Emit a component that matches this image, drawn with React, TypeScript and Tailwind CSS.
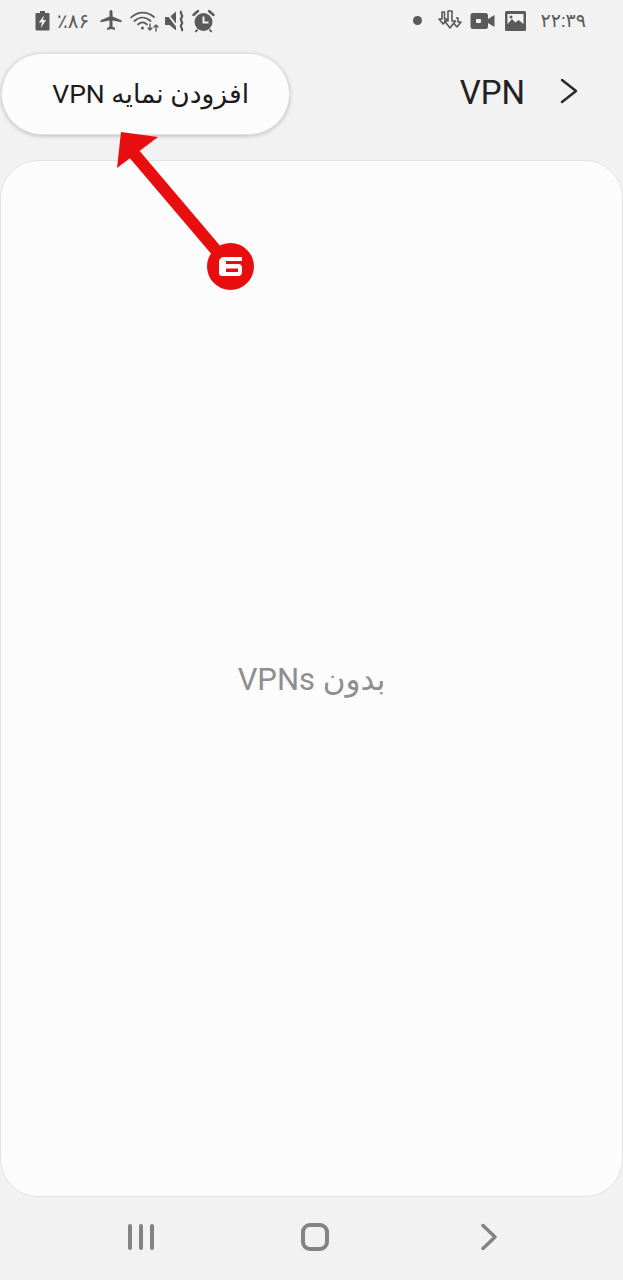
const fontStack = "font-['Roboto','DejaVu_Sans',sans-serif]";

const StatusLeft = () => (
  <div className="flex items-center text-[#5a5a5a]">
    {/* battery charging */}
    <svg width="15" height="21" viewBox="0 0 15 21" className="ml-[35px]">
      <path d="M5 1h5v2h3.500a1 1 0 0 1 1 1v15.500a1 1 0 0 1-1 1H1.500a1 1 0 0 1-1-1V4a1 1 0 0 1 1-1H5z" fill="#5a5a5a" />
      <path d="M9 5.500 3.800 12.500H7l-1.300 5.500 5.500-8H8z" fill="#f2f2f2" />
    </svg>
    <span className={`ml-[7px] w-[33px] text-[20px] leading-none ${fontStack}`}>٪۸۶</span>
    {/* airplane */}
    <svg width="24" height="24" viewBox="0 0 24 24" className="ml-[9px]" fill="#5a5a5a">
      <path d="M22.500 13.200v-2l-9-3.600V2.800C13.500 1.900 12.800 1 12 1s-1.500.9-1.500 1.800v4.800l-9 3.600v2l9-1.600v5.800L8 19.200V21l4-.9 4 .9v-1.800l-2.500-1.800v-5.800z" />
    </svg>
    {/* wifi with arrows */}
    <svg width="29" height="24" viewBox="0 0 29 24" className="ml-[7px]" fill="none" stroke="#5a5a5a" strokeWidth="1.700" strokeLinecap="round">
      <path d="M1 8.500C8 2 17 2 24 8" />
      <path d="M4.500 12c5-4.500 11-4.500 16 0" />
      <path d="M8 15.500c3-2.700 6-2.700 9 0" />
      <circle cx="12.500" cy="19" r="1.500" fill="#5a5a5a" stroke="none" />
      <path d="M20 15v6m-2-2 2 2 2-2M26 22v-6m-2 2 2-2 2 2" strokeWidth="1.400" />
    </svg>
    {/* muted vibrate */}
    <svg width="22" height="24" viewBox="0 0 22 24" className="ml-[5px]">
      <path d="M1 8h4.500L12 2.500v19L5.500 16H1z" fill="#5a5a5a" />
      <path d="M2 3l13 17" stroke="#f2f2f2" strokeWidth="2" />
      <path d="M17.500 2c-2.500 2.500 2.500 4 0 6.700s2.500 4 0 6.700 2.500 4 0 6.600" stroke="#5a5a5a" strokeWidth="2.200" fill="none" />
    </svg>
    {/* alarm */}
    <svg width="23" height="24" viewBox="0 0 23 24" className="ml-[6px]">
      <circle cx="11.500" cy="13" r="9" fill="#5a5a5a" />
      <path d="M11.500 7.500V13.500H16.500" stroke="#f2f2f2" strokeWidth="2" fill="none" />
      <path d="M1.500 6 6 2M21.500 6 17 2" stroke="#5a5a5a" strokeWidth="2.400" strokeLinecap="round" />
      <path d="M5.500 20.500 3.500 23M17.500 20.500l2 2.500" stroke="#5a5a5a" strokeWidth="2" />
    </svg>
  </div>
);

const StatusRight = () => (
  <div className="flex items-center text-[#5a5a5a]">
    <span className="w-[9px] h-[9px] rounded-full bg-[#5a5a5a]" />
    {/* download arrows */}
    <svg width="24" height="22" viewBox="0 0 24 22" className="ml-[16px]" fill="none" stroke="#5a5a5a" strokeWidth="1.600" strokeLinejoin="round">
      <path d="M4 2h2.500v7h2.700L5.200 14 1 9h3z" />
      <path d="M10 1h4v10h3.500L12 18 6.500 11H10z" fill="#f2f2f2" />
      <path d="M18 8h2v4h3l-4 5-3.500-4" />
    </svg>
    {/* video */}
    <svg width="25" height="18" viewBox="0 0 25 18" className="ml-[8px]">
      <rect x="0.500" y="1" width="17.500" height="16" rx="2.500" fill="#5a5a5a" />
      <path d="M18 7l6.500-4v12L18 11z" fill="#5a5a5a" />
      <rect x="6" y="7" width="5" height="4" rx="1" fill="#f2f2f2" />
    </svg>
    {/* image */}
    <svg width="21" height="20" viewBox="0 0 21 20" className="ml-[10px]">
      <rect x="0" y="0" width="21" height="20" rx="1.500" fill="#5a5a5a" />
      <rect x="2.500" y="3" width="16" height="10" fill="#f2f2f2" />
      <path d="M2.500 13 7 8l3.500 3.500 3-2.500 5 4v2.500h-16z" fill="#5a5a5a" />
      <circle cx="6" cy="6" r="1.500" fill="#5a5a5a" />
    </svg>
    <span className={`ml-[15px] mr-[37px] text-[19px] leading-none ${fontStack}`}>۲۲:۳۹</span>
  </div>
);

export default function App() {
  return (
    <div className={`relative w-[623px] h-[1280px] overflow-hidden bg-[#f2f2f2] flex flex-col ${fontStack}`}>
      <div className="h-[41px] flex items-center justify-between">
        <StatusLeft />
        <StatusRight />
      </div>

      {/* header */}
      <div className="h-[119px] pb-[10px] flex items-center justify-between">
        <div
          dir="rtl"
          className="ml-[1px] w-[289px] h-[82px] rounded-[41px] bg-[#fcfcfc] border border-[#e2e2e2] shadow-[0_1px_4px_rgba(0,0,0,0.22)] flex items-center pr-[40px] text-[26.500px] text-[#1b1b1b] -mt-[3px]"
        >
          افزودن نمایه VPN
        </div>
        <div className="flex items-center mr-[44px] -mt-[6px]">
          <span className="text-[33px] leading-none text-[#222222] font-['Roboto',sans-serif]">VPN</span>
          <svg width="20" height="28" viewBox="0 0 20 28" className="ml-[34px] -mt-[3px]" fill="none" stroke="#2a2a2a" strokeWidth="2.500" strokeLinecap="round" strokeLinejoin="round">
            <path d="M3 3l14 11L3 25" />
          </svg>
        </div>
      </div>

      {/* content card */}
      <div className="h-[1037px] rounded-[38px] bg-[#fcfcfc] border border-[#e3e3e3] flex items-center justify-center">
        <span dir="rtl" className="mt-[4px] text-[31px] text-[#8e8e8e] font-['Roboto','DejaVu_Sans',sans-serif]">بدون VPNs</span>
      </div>

      {/* nav bar */}
      <div className="flex-1 pb-[4px] flex items-center justify-between pl-[128px] pr-[126px]">
        <div className="flex gap-[7px]">
          <span className="w-[4px] h-[26px] rounded-full bg-[#838383]" />
          <span className="w-[4px] h-[26px] rounded-full bg-[#838383]" />
          <span className="w-[4px] h-[26px] rounded-full bg-[#838383]" />
        </div>
        <span className="-ml-[5px] w-[28px] h-[28px] rounded-[9px] border-[4px] border-[#838383]" />
        <svg width="16" height="28" viewBox="0 0 16 28" fill="none" stroke="#838383" strokeWidth="3.500" strokeLinecap="round" strokeLinejoin="round">
          <path d="M2 2.500l12 11.500-12 11.500" />
        </svg>
      </div>

      {/* annotation arrow over the page */}
      <svg width="623" height="300" viewBox="0 0 623 300" className="absolute left-0 top-0 pointer-events-none">
        <path d="M226 262 130 149" stroke="#e80e10" strokeWidth="12" />
        <path d="M121 132 158 137 117 168z" fill="#e80e10" />
        <circle cx="230.500" cy="266.500" r="23.500" fill="#e80e10" />
        {/* number 6 */}
        <path
          fillRule="evenodd"
          fill="#ffffff"
          d="M224 257h18v4h-16v3h12a4 4 0 0 1 4 4v4a4 4 0 0 1-4 4h-16a3 3 0 0 1-3-3v-11a5 5 0 0 1 5-5zM226 268.500v3.500h12v-3.500z"
        />
      </svg>
    </div>
  );
}
